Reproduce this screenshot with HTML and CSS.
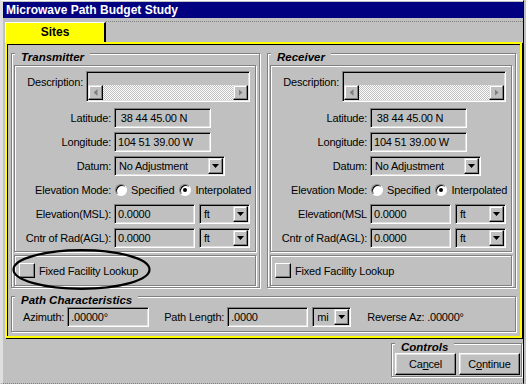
FILE: index.html
```html
<!DOCTYPE html>
<html>
<head>
    <link rel="stylesheet" href="styles.css">
</head>
<body>
    <div class="window">
        <div class="titlebar">Microwave Path Budget Study</div>
        <div class="tabs">
            <div class="tab">Sites</div>
            <div class="tab-rest"></div>
        </div>
        <div class="page">
            <div class="sites">
                <div class="group">
                    <div class="group-title">Transmitter</div>
                    <div class="inner">
                        <div class="row desc-row">
                            <span class="label desc-label">Description:</span>
                            <div class="field desc">
                                <div class="desc-text"></div>
                                <div class="hscroll">
                                    <span class="sbtn"><i class="arrow-left"></i></span>
                                    <span class="track"></span>
                                    <span class="sbtn"><i class="arrow-right"></i></span>
                                </div>
                            </div>
                        </div>
                        <div class="row first">
                            <span class="label">Latitude:</span>
                            <div class="field text coord">&nbsp;38 44 45.00 N</div>
                        </div>
                        <div class="row">
                            <span class="label">Longitude:</span>
                            <div class="field text coord">104 51 39.00 W</div>
                        </div>
                        <div class="row">
                            <span class="label">Datum:</span>
                            <div class="field select datum"><span class="value">No Adjustment</span><span class="dd"><i></i></span></div>
                        </div>
                        <div class="row">
                            <span class="label">Elevation Mode:</span>
                            <span class="radio"></span><span class="opt">Specified</span>
                            <span class="radio on"></span><span class="opt">Interpolated</span>
                        </div>
                        <div class="row">
                            <span class="label">Elevation(MSL):</span>
                            <div class="field text num">0.0000</div>
                            <div class="field select unit"><span class="value">ft</span><span class="dd"><i></i></span></div>
                        </div>
                        <div class="row">
                            <span class="label">Cntr of Rad(AGL):</span>
                            <div class="field text num">0.0000</div>
                            <div class="field select unit"><span class="value">ft</span><span class="dd"><i></i></span></div>
                        </div>
                    </div>
                    <div class="facility">
                        <span class="check"></span>
                        <span>Fixed Facility Lookup</span>
                    </div>
                    <svg class="circle" width="139" height="41" viewBox="0 0 139 41">
                        <ellipse cx="69.5" cy="20.5" rx="68" ry="19.3" fill="none" stroke="#000" stroke-width="2.2"/>
                    </svg>
                </div>

                <div class="group">
                    <div class="group-title">Receiver</div>
                    <div class="inner">
                        <div class="row desc-row">
                            <span class="label desc-label">Description:</span>
                            <div class="field desc">
                                <div class="desc-text"></div>
                                <div class="hscroll">
                                    <span class="sbtn"><i class="arrow-left"></i></span>
                                    <span class="track"></span>
                                    <span class="sbtn"><i class="arrow-right"></i></span>
                                </div>
                            </div>
                        </div>
                        <div class="row first">
                            <span class="label">Latitude:</span>
                            <div class="field text coord">&nbsp;38 44 45.00 N</div>
                        </div>
                        <div class="row">
                            <span class="label">Longitude:</span>
                            <div class="field text coord">104 51 39.00 W</div>
                        </div>
                        <div class="row">
                            <span class="label">Datum:</span>
                            <div class="field select datum"><span class="value">No Adjustment</span><span class="dd"><i></i></span></div>
                        </div>
                        <div class="row">
                            <span class="label">Elevation Mode:</span>
                            <span class="radio"></span><span class="opt">Specified</span>
                            <span class="radio on"></span><span class="opt">Interpolated</span>
                        </div>
                        <div class="row">
                            <span class="label">Elevation(MSL</span>
                            <div class="field text num">0.0000</div>
                            <div class="field select unit"><span class="value">ft</span><span class="dd"><i></i></span></div>
                        </div>
                        <div class="row">
                            <span class="label">Cntr of Rad(AGL):</span>
                            <div class="field text num">0.0000</div>
                            <div class="field select unit"><span class="value">ft</span><span class="dd"><i></i></span></div>
                        </div>
                    </div>
                    <div class="facility">
                        <span class="check"></span>
                        <span>Fixed Facility Lookup</span>
                    </div>
                </div>
            </div>

            <div class="group path">
                <div class="group-title">Path Characteristics</div>
                <div class="path-row">
                    <span class="plabel">Azimuth:</span>
                    <div class="field text az">.00000°</div>
                    <span class="plabel length">Path Length:</span>
                    <div class="field text len">.0000</div>
                    <div class="field select mi"><span class="value">mi</span><span class="dd"><i></i></span></div>
                    <span class="reverse">Reverse Az: .00000°</span>
                </div>
            </div>
        </div>

        <div class="bottom">
            <div class="group controls">
                <div class="group-title">Controls</div>
                <div class="buttons">
                    <button class="btn">Ca<u>n</u>cel</button>
                    <button class="btn">C<u>o</u>ntinue</button>
                </div>
            </div>
        </div>
    </div>
</body>
</html>
```

FILE: styles.css
```css
body {
    margin: 0;
    background-color: #c0c0c0;
    font-family: "Liberation Sans", Arial, sans-serif;
    font-size: 11px;
    color: #000;
}

.window {
    width: 524px;
    height: 384px;
    box-sizing: border-box;
    border-top: 1px solid #fff;
    border-left: 3px solid #dfdfdf;
    border-right: 1px solid #000;
    border-bottom: 1px dotted #808080;
}

.titlebar {
    margin-top: 1px;
    height: 16px;
    line-height: 16px;
    padding-left: 3px;
    background-color: #000080;
    color: #fff;
    font-size: 12px;
    font-weight: bold;
}

.tabs {
    display: flex;
    height: 24px;
    align-items: flex-end;
}

.tab {
    margin-left: 2px;
    width: 101px;
    height: 20px;
    box-sizing: border-box;
    background-color: #ffff00;
    border-top: 1px solid #fff;
    border-left: 1px solid #fff;
    border-right: 2px solid #000;
    text-align: center;
    line-height: 19px;
    font-size: 12px;
    font-weight: bold;
}

.tab-rest {
    flex: 1;
    align-self: flex-start;
    margin-top: 3px;
    border-top: 1px dotted #808080;
}

.page {
    margin-left: 2px;
    width: 517px;
    height: 296px;
    box-sizing: border-box;
    border: 2px solid #ffff00;
    box-shadow: 1px 1px 0 #000, inset 1px 1px 0 #000;
    padding: 9px 0 0 4px;
}

.sites {
    display: grid;
    grid-template-columns: 249px 249px;
    column-gap: 7px;
}

.group {
    position: relative;
    border: 1px solid #808080;
    box-shadow: inset 1px 1px 0 #fff, 1px 1px 0 #fff;
}

.group-title {
    width: max-content;
    height: 14px;
    line-height: 14px;
    margin: -4px 0 0 3px;
    padding: 0 6px;
    background-color: #c0c0c0;
    font-size: 11.5px;
    font-weight: bold;
    font-style: italic;
}

.inner {
    margin: 1px 3px 0 2px;
    padding: 5px 0 3px 0;
    border: 1px solid #808080;
    box-shadow: inset 1px 1px 0 #fff, 1px 1px 0 #fff;
}

.facility {
    display: flex;
    align-items: center;
    height: 31px;
    box-sizing: border-box;
    margin: 3px 3px 1px 2px;
    padding-left: 4px;
    border: 1px solid #808080;
    box-shadow: inset 1px 1px 0 #fff, 1px 1px 0 #fff;
    letter-spacing: -0.2px;
}

.check {
    width: 16px;
    height: 15px;
    box-sizing: border-box;
    margin-right: 4px;
    border: 1px solid;
    border-color: #fff #000 #000 #fff;
    box-shadow: inset -1px -1px 0 #808080;
}

.circle {
    position: absolute;
    left: 0;
    top: 195px;
}

.row {
    display: flex;
    align-items: center;
    height: 20px;
    margin-top: 4px;
    letter-spacing: -0.2px;
}

.row.first {
    margin-top: 6px;
}

.desc-row {
    height: 31px;
    align-items: flex-start;
    margin-top: 0;
}

.label {
    flex: none;
    width: 96px;
    margin-right: 3px;
    text-align: right;
    white-space: nowrap;
}

.desc-label {
    width: 68px;
    padding-top: 5px;
    line-height: 13px;
}

.field {
    flex: none;
    height: 20px;
    box-sizing: border-box;
    border: 1px solid;
    border-color: #808080 #fff #fff #808080;
    box-shadow: inset 1px 1px 0 #000, inset -1px -1px 0 #dfdfdf;
    background-color: #c0c0c0;
}

.text {
    padding-left: 3px;
    line-height: 18px;
    white-space: pre;
}

.coord {
    width: 97px;
}

.num {
    width: 81px;
}

.select {
    display: flex;
    padding: 1px 1px 1px 2px;
}

.select .value {
    flex: 1;
    padding-left: 2px;
    line-height: 16px;
}

.datum {
    width: 111px;
}

.unit {
    width: 51px;
    margin-left: 4px;
}

.dd {
    display: flex;
    align-items: center;
    justify-content: center;
    width: 15px;
    height: 16px;
    box-sizing: border-box;
    border: 1px solid;
    border-color: #dfdfdf #000 #000 #dfdfdf;
    box-shadow: inset -1px -1px 0 #808080, inset 1px 1px 0 #fff;
}

.dd i {
    width: 7px;
    height: 4px;
    background-color: #000;
    clip-path: polygon(0 0, 100% 0, 50% 100%);
}

.desc {
    width: 164px;
    height: 31px;
    padding: 1px;
    display: flex;
    flex-direction: column;
}

.desc-text {
    height: 12px;
}

.hscroll {
    display: flex;
    height: 15px;
}

.sbtn {
    display: flex;
    align-items: center;
    justify-content: center;
    width: 15px;
    height: 15px;
    box-sizing: border-box;
    border: 1px solid;
    border-color: #dfdfdf #000 #000 #dfdfdf;
    box-shadow: inset -1px -1px 0 #808080, inset 1px 1px 0 #fff;
}

.sbtn i {
    width: 4px;
    height: 7px;
    background-color: #808080;
}

.arrow-left {
    clip-path: polygon(100% 0, 100% 100%, 0 50%);
}

.arrow-right {
    clip-path: polygon(0 0, 0 100%, 100% 50%);
}

.track {
    flex: 1;
    background: repeating-conic-gradient(#fff 0 25%, #c0c0c0 0 50%) 0 0 / 2px 2px;
}

.radio {
    flex: none;
    display: flex;
    align-items: center;
    justify-content: center;
    width: 12px;
    height: 12px;
    box-sizing: border-box;
    margin: 0 4px 0 1px;
    border-radius: 50%;
    border: 1px solid;
    border-color: #808080 #fff #fff #808080;
    box-shadow: inset 1px 1px 0 #000;
    background-color: #fff;
}

.radio.on::after {
    content: "";
    width: 4px;
    height: 4px;
    border-radius: 50%;
    background-color: #000;
}

.opt {
    margin-right: 4px;
}

.path {
    width: 505px;
    box-sizing: border-box;
    margin-top: 8px;
    padding-bottom: 4px;
}

.path-row {
    display: flex;
    align-items: center;
    height: 20px;
    padding-left: 11px;
    letter-spacing: -0.2px;
}

.plabel {
    margin-right: 3px;
}

.plabel.length {
    margin-left: 15px;
}

.az {
    width: 82px;
}

.len {
    width: 81px;
}

.mi {
    width: 39px;
    margin-left: 4px;
}

.reverse {
    margin-left: 16px;
}

.bottom {
    display: flex;
    justify-content: flex-end;
}

.controls {
    width: 131px;
    box-sizing: border-box;
    margin: 5px 1px 0 0;
    padding-bottom: 1px;
}

.buttons {
    display: flex;
    gap: 3px;
    margin-top: -1px;
    padding-left: 3px;
}

.btn {
    width: 61px;
    height: 22px;
    padding: 0;
    border: 1px solid;
    border-color: #fff #000 #000 #fff;
    box-shadow: inset -1px -1px 0 #808080, inset 1px 1px 0 #dfdfdf;
    background-color: #c0c0c0;
    font-family: "Liberation Sans", Arial, sans-serif;
    font-size: 11px;
    letter-spacing: -0.2px;
    color: #000;
}
```
